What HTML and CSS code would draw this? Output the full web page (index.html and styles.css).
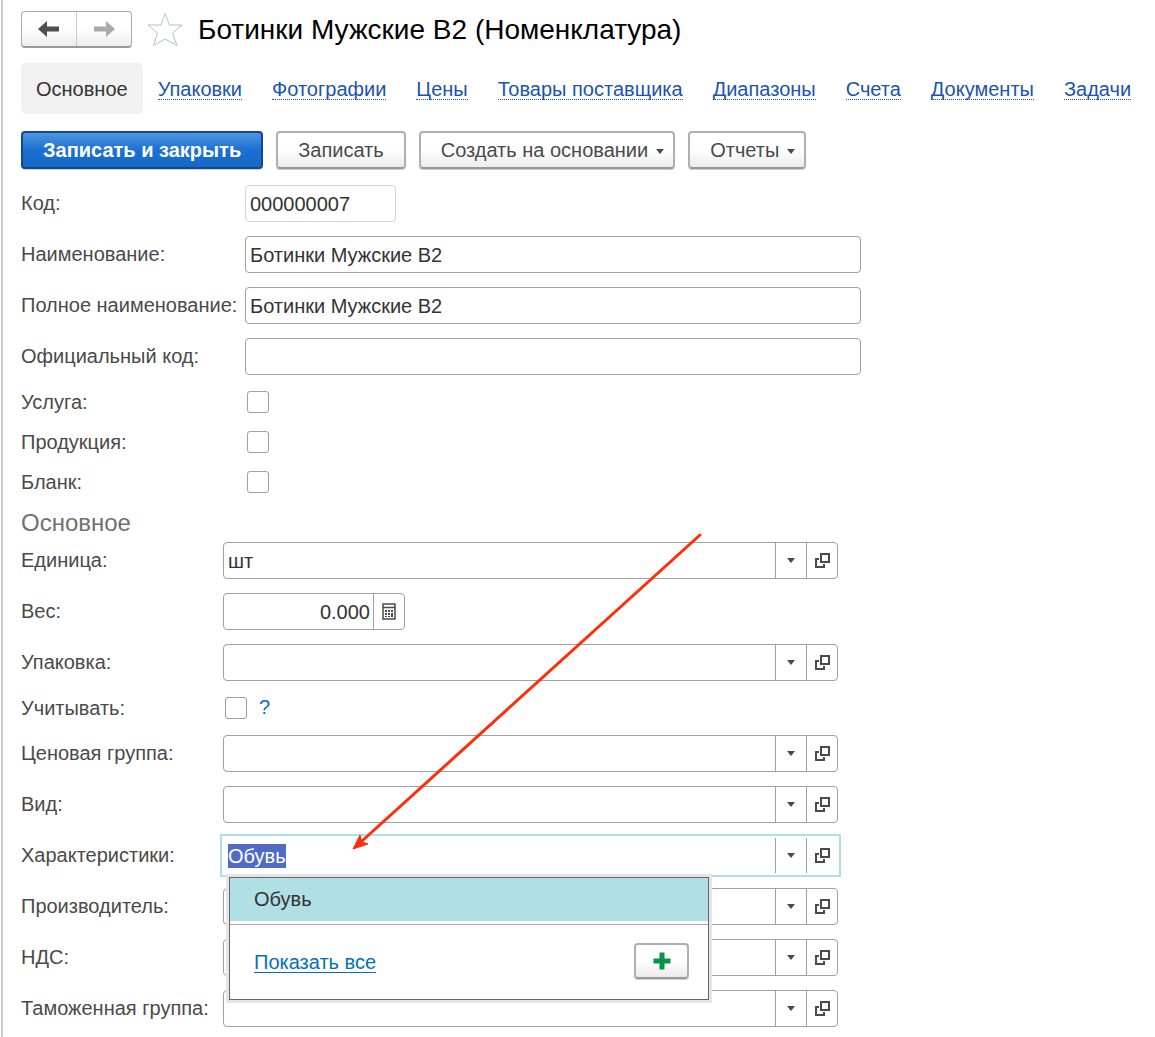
FILE: index.html
```html
<!DOCTYPE html>
<html lang="ru">
<head>
<meta charset="utf-8">
<title>Ботинки Мужские В2 (Номенклатура)</title>
<link rel="stylesheet" href="styles.css">
</head>
<body>
<svg class="sprite" aria-hidden="true">
  <symbol id="open" viewBox="0 0 15 15"><path d="M6 1H14V9H6ZM4 6H1V14H9V11" fill="none" stroke="currentColor" stroke-width="2"/></symbol>
  <symbol id="caret" viewBox="0 0 8 5"><path d="M0 0H8L4 5Z" fill="currentColor"/></symbol>
</svg>
<main class="page">
  <header class="header">
    <div class="history">
      <button class="history-btn" type="button" aria-label="Назад"><svg width="22" height="16" viewBox="0 0 22 16"><path d="M0 8L9 0V5.500H21V10.500H9V16Z" fill="currentColor"/></svg></button>
      <button class="history-btn history-next" type="button" aria-label="Вперед"><svg width="22" height="16" viewBox="0 0 22 16"><path d="M22 8L13 0V5.500H1V10.500H13V16Z" fill="currentColor"/></svg></button>
    </div>
    <button class="star" type="button" aria-label="В избранное"><svg width="36" height="35" viewBox="0 0 36 35"><path d="M18 1.500L22.500 13H35L25.500 21L30 33.500L18 27L6.500 33.500L10.500 21L1 13H14Z" fill="#fff" stroke="#b9c0c7" stroke-width="1"/></svg></button>
    <h1 class="title">Ботинки Мужские В2 (Номенклатура)</h1>
  </header>

  <nav class="tabs">
    <span class="tab tab-active">Основное</span>
    <span class="tab"><a href="#">Упаковки</a></span>
    <span class="tab"><a href="#">Фотографии</a></span>
    <span class="tab"><a href="#">Цены</a></span>
    <span class="tab"><a href="#">Товары поставщика</a></span>
    <span class="tab"><a href="#">Диапазоны</a></span>
    <span class="tab"><a href="#">Счета</a></span>
    <span class="tab"><a href="#">Документы</a></span>
    <span class="tab"><a href="#">Задачи</a></span>
  </nav>

  <div class="toolbar">
    <button class="btn btn-primary" type="button">Записать и закрыть</button>
    <button class="btn" type="button">Записать</button>
    <button class="btn btn-menu" type="button">Создать на основании<svg width="8" height="5"><use href="#caret"/></svg></button>
    <button class="btn btn-menu" type="button">Отчеты<svg width="8" height="5"><use href="#caret"/></svg></button>
  </div>

  <form class="form">
    <section class="group group-wide">
      <div class="row"><label for="code">Код:</label><input class="field field-code" id="code" type="text" value="000000007" readonly></div>
      <div class="row"><label for="name">Наименование:</label><input class="field" id="name" type="text" value="Ботинки Мужские В2"></div>
      <div class="row"><label for="fullname">Полное наименование:</label><input class="field" id="fullname" type="text" value="Ботинки Мужские В2"></div>
      <div class="row"><label for="official">Официальный код:</label><input class="field" id="official" type="text"></div>
      <div class="row row-check"><label for="service">Услуга:</label><input class="check" id="service" type="checkbox"></div>
      <div class="row row-check"><label for="product">Продукция:</label><input class="check" id="product" type="checkbox"></div>
      <div class="row row-check"><label for="blank">Бланк:</label><input class="check" id="blank" type="checkbox"></div>
    </section>

    <h2 class="subtitle">Основное</h2>

    <section class="group">
      <div class="row"><label for="unit">Единица:</label>
        <div class="combo"><input id="unit" type="text" value="шт"><button type="button" aria-label="Выбрать"><svg width="8" height="5"><use href="#caret"/></svg></button><button type="button" aria-label="Открыть"><svg width="15" height="15"><use href="#open"/></svg></button></div></div>
      <div class="row"><label for="weight">Вес:</label>
        <div class="combo combo-number"><input id="weight" type="text" value="0.000"><button type="button" aria-label="Калькулятор"><svg width="14" height="17" viewBox="0 0 14 17"><path d="M1 1H13V16H1ZM1 4.500H13" fill="none" stroke="currentColor" stroke-width="1.500"/><path d="M3 7h2v2H3zM6 7h2v2H6zM9 7h2v2H9zM3 10h2v2H3zM6 10h2v2H6zM9 10h2v4H9zM3 13h2v1H3zM6 13h2v1H6z" fill="currentColor"/></svg></button></div></div>
      <div class="row"><label for="pack">Упаковка:</label>
        <div class="combo"><input id="pack" type="text"><button type="button" aria-label="Выбрать"><svg width="8" height="5"><use href="#caret"/></svg></button><button type="button" aria-label="Открыть"><svg width="15" height="15"><use href="#open"/></svg></button></div></div>
      <div class="row row-check"><label for="account">Учитывать:</label><input class="check" id="account" type="checkbox"><a class="help" href="#">?</a></div>
      <div class="row"><label for="price">Ценовая группа:</label>
        <div class="combo"><input id="price" type="text"><button type="button" aria-label="Выбрать"><svg width="8" height="5"><use href="#caret"/></svg></button><button type="button" aria-label="Открыть"><svg width="15" height="15"><use href="#open"/></svg></button></div></div>
      <div class="row"><label for="kind">Вид:</label>
        <div class="combo"><input id="kind" type="text"><button type="button" aria-label="Выбрать"><svg width="8" height="5"><use href="#caret"/></svg></button><button type="button" aria-label="Открыть"><svg width="15" height="15"><use href="#open"/></svg></button></div></div>
      <div class="row"><label for="traits">Характеристики:</label>
        <div class="combo combo-open"><input id="traits" type="text" value="Обувь" autocomplete="off" autofocus><button type="button" aria-label="Выбрать"><svg width="8" height="5"><use href="#caret"/></svg></button><button type="button" aria-label="Открыть"><svg width="15" height="15"><use href="#open"/></svg></button>
          <div class="popup">
            <button class="popup-item" type="button">Обувь</button>
            <div class="popup-foot">
              <a href="#">Показать все</a>
              <button class="btn btn-add" type="button" aria-label="Создать"><svg width="18" height="18" viewBox="0 0 18 18"><path d="M6.500 0.500H11.500V6.500H17.500V11.500H11.500V17.500H6.500V11.500H0.500V6.500H6.500Z" fill="#079447"/></svg></button>
            </div>
          </div>
        </div></div>
      <div class="row"><label for="maker">Производитель:</label>
        <div class="combo"><input id="maker" type="text"><button type="button" aria-label="Выбрать"><svg width="8" height="5"><use href="#caret"/></svg></button><button type="button" aria-label="Открыть"><svg width="15" height="15"><use href="#open"/></svg></button></div></div>
      <div class="row"><label for="vat">НДС:</label>
        <div class="combo"><input id="vat" type="text"><button type="button" aria-label="Выбрать"><svg width="8" height="5"><use href="#caret"/></svg></button><button type="button" aria-label="Открыть"><svg width="15" height="15"><use href="#open"/></svg></button></div></div>
      <div class="row"><label for="customs">Таможенная группа:</label>
        <div class="combo"><input id="customs" type="text"><button type="button" aria-label="Выбрать"><svg width="8" height="5"><use href="#caret"/></svg></button><button type="button" aria-label="Открыть"><svg width="15" height="15"><use href="#open"/></svg></button></div></div>
    </section>
    <svg class="pointer" width="352" height="320" viewBox="0 0 352 320" aria-hidden="true"><path d="M349 3L11 309" stroke="#ff2d0a" stroke-width="3" stroke-linecap="round"/><path d="M2 317L9 303L10.500 309.500L17 312Z" fill="#ff2d0a" stroke="#ff2d0a"/></svg>
  </form>
</main>
<script src="script.js"></script>
</body>
</html>
```
FILE: styles.css
```css
* { box-sizing: border-box; }

body {
  margin: 0;
  background: #fff;
  color: #4a4a4a;
  font: 20px/24px "Liberation Sans", Arial, sans-serif;
}

button, input { font: inherit; color: inherit; }
button { padding: 0; cursor: pointer; }
svg { display: block; }
.sprite { position: absolute; width: 0; height: 0; }

.page {
  min-height: 100vh;
  margin-left: 1px;
  padding: 11px 12px 10px 18px;
  border-left: 2px solid #ccc;
}

.header { display: flex; align-items: center; height: 37px; }

.history {
  display: flex;
  width: 111px;
  height: 37px;
  border: 1px solid #aaa;
  border-bottom: 2px solid #999;
  border-radius: 4px;
  background: linear-gradient(#fff 50%, #ececec);
}
.history-btn {
  display: flex;
  flex: 1;
  align-items: center;
  justify-content: center;
  border: 0;
  background: none;
  color: #505050;
}
.history-next { border-left: 1px solid #ccc; color: #aaa; }

.star { margin-left: 15px; border: 0; background: none; }

.title {
  margin: 0 0 0 15px;
  color: #000;
  font-size: 28px;
  font-weight: 400;
  line-height: 36px;
}

.tabs { display: flex; margin-top: 15px; }
.tab { padding: 14px 15px 13px; white-space: nowrap; }
.tab-active { border-radius: 5px; background: #f1f1f1; color: #333; }
.tab a {
  display: inline-block;
  border-bottom: 1px dotted #1a54ad;
  color: #1a54ad;
  line-height: 20px;
  text-decoration: none;
}

.toolbar { display: flex; gap: 13px; margin-top: 17px; }
.btn {
  display: flex;
  align-items: center;
  justify-content: center;
  gap: 8px;
  height: 38px;
  padding: 0 20px;
  border: 2px solid #b0b0b0;
  border-bottom-color: #999;
  border-radius: 4px;
  background: linear-gradient(#fff 50%, #ebebeb);
  box-shadow: 0 1px 0 #ccc;
  white-space: nowrap;
}
.btn-menu { padding-right: 9px; }
.btn-menu svg { margin-top: 3px; }
.btn-primary {
  border-color: #0f4a90;
  background: linear-gradient(#4f95e0, #1b70d2 50%, #1668c6);
  color: #fff;
  font-weight: 700;
}

.form { position: relative; margin-top: 16px; }
.group { display: grid; gap: 14px; }
.row {
  display: grid;
  grid-template-columns: 202px minmax(0, 615px);
  align-items: center;
  height: 37px;
}
.group-wide .row { grid-template-columns: 224px minmax(0, 616px); }
.row label { padding-bottom: 1px; white-space: nowrap; }

.field {
  width: 100%;
  height: 37px;
  padding: 2px 4px 0;
  border: 1px solid #a0a0a0;
  border-radius: 4px;
  background: #fff;
  color: #333;
}
.field-code { width: 151px; border-color: #d4d4d4; }

.row.row-check { grid-template-columns: 202px 36px auto; justify-content: start; height: 26px; }
.group-wide .row.row-check { grid-template-columns: 224px 36px; }
.check {
  appearance: none;
  width: 22px;
  height: 22px;
  margin: 0 2px;
  border: 1px solid #a0a0a0;
  border-radius: 3px;
  background: #fff;
}
.help { padding-bottom: 2px; color: #0070c0; text-decoration: none; }

.subtitle {
  margin: 13px 0 4px;
  color: #707070;
  font-size: 24px;
  font-weight: 400;
  line-height: 30px;
}

.combo {
  position: relative;
  display: flex;
  height: 37px;
  border: 1px solid #a0a0a0;
  border-radius: 4px;
  background: #fff;
}
.combo input {
  flex: 1;
  min-width: 0;
  padding: 0 4px;
  border: 0;
  outline: 0;
  background: none;
  color: #333;
}
.combo > button {
  display: flex;
  align-items: center;
  justify-content: center;
  width: 31px;
  border: 0;
  border-left: 1px solid #a0a0a0;
  background: none;
  color: #4a4a4a;
}
.combo-number { width: 182px; }
.combo-number input { padding-right: 3px; text-align: right; }

.combo-open { border-color: transparent; border-radius: 0; outline: 2px solid #b0dfe5; outline-offset: 1px; }
.combo-open input::selection { background: #4f6bc4; color: #fff; }

.popup {
  position: absolute;
  z-index: 1;
  top: 39px;
  left: 5px;
  width: 480px;
  border: 1px solid #666;
  background: #fff;
  box-shadow: 0 0 0 3px #e5e5e5;
}
.popup-item {
  display: block;
  width: 100%;
  height: 43px;
  padding: 0 24px 2px;
  border: 0;
  background: #b0dfe5;
  color: #333;
  text-align: left;
}
.popup-foot {
  display: flex;
  align-items: center;
  justify-content: space-between;
  height: 75px;
  margin-top: 3px;
  padding: 0 19px 0 24px;
  border-top: 1px solid #aaa;
}
.popup-foot a { color: #0070c0; text-decoration: none; border-bottom: 1px solid #0070c0; line-height: 20px; }
.btn-add { width: 55px; height: 36px; margin-bottom: 2px; padding: 0; }

.pointer { position: absolute; z-index: 2; top: 347px; left: 330px; fill: none; pointer-events: none; }
```
FILE: script.js
```js
const traits = document.getElementById("traits");
traits.focus({ preventScroll: true });
traits.select();
```
